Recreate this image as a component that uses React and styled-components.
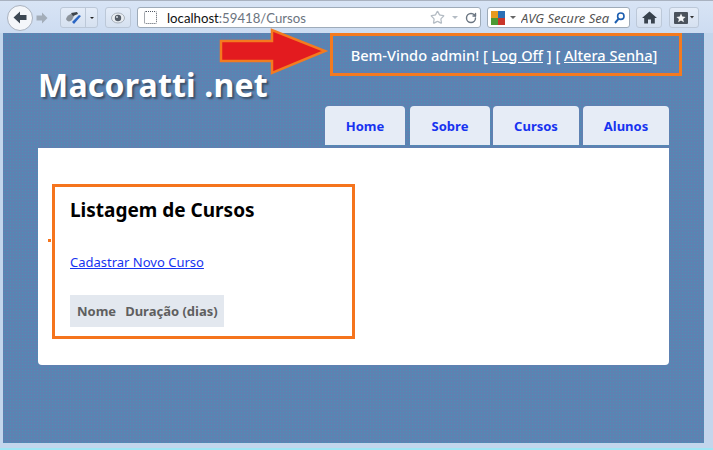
import styled, { createGlobalStyle } from "styled-components";
import { RotateCw, Star } from "lucide-react";

const GlobalStyle = createGlobalStyle`
  html, body {
    margin: 0;
    padding: 0;
    width: 713px;
    height: 450px;
    overflow: hidden;
    background: #c3d6ec;
    font-family: "Noto Sans", "DejaVu Sans", sans-serif;
  }
`;

const Window = styled.div`
  position: relative;
  width: 713px;
  height: 450px;
  display: flex;
  flex-direction: column;
  background: #c3d6ec;
  border-bottom: 2px solid #9fe6f4;
  box-sizing: border-box;
`;

const Toolbar = styled.div`
  height: 33px;
  flex: none;
  display: flex;
  align-items: center;
  padding: 1px 9px 0 7px;
  box-sizing: border-box;
  background: linear-gradient(#d8e4f5, #cddcf1);
  border-top: 1px solid #a9b2c0;
`;

const BackButton = styled.div`
  width: 26px;
  height: 26px;
  border-radius: 50%;
  flex: none;
  display: flex;
  align-items: center;
  justify-content: center;
  background: #f4f6fa;
  border: 1px solid #aab2bf;
  box-sizing: border-box;
`;

const ForwardButton = styled.div`
  width: 21px;
  height: 20px;
  margin-left: -2px;
  flex: none;
  display: flex;
  align-items: center;
  justify-content: center;
`;

const ToolButton = styled.div`
  height: 21px;
  width: ${(p) => p.$w}px;
  margin-left: ${(p) => p.$ml || 0}px;
  flex: none;
  display: flex;
  align-items: center;
  justify-content: center;
  border: 1px solid #bcc8d8;
  border-radius: 3px;
  background: linear-gradient(#e4ecf8, #d6e1f0);
  box-sizing: border-box;
`;

const SplitMain = styled.span`
  flex: 1;
  height: 100%;
  display: flex;
  align-items: center;
  justify-content: center;
  border-right: 1px solid #bcc8d8;
`;

const SplitCaret = styled.span`
  width: 11px;
  flex: none;
  display: flex;
  justify-content: center;
`;

const Field = styled.div`
  height: 21px;
  width: ${(p) => p.$w}px;
  margin-left: ${(p) => p.$ml}px;
  flex: none;
  display: flex;
  align-items: center;
  background: #fff;
  border: 1px solid #9eabb9;
  border-radius: 3px;
  box-sizing: border-box;
`;

const Favicon = styled.span`
  width: 13px;
  height: 13px;
  margin: 0 10px 0 6px;
  flex: none;
  border: 1px dotted #4f5762;
  border-radius: 2px;
  box-sizing: border-box;
`;

const UrlText = styled.span`
  flex: 1;
  font-family: Lato, "Noto Sans", sans-serif;
  font-size: 13.2px;
  color: #111;
  white-space: nowrap;
`;

const UrlMuted = styled.span`
  color: #6c7480;
`;

const SearchText = styled.span`
  flex: 1;
  font-size: 13px;
  font-style: italic;
  color: #555;
  white-space: nowrap;
  overflow: hidden;
`;

const Caret = styled.span`
  width: 0;
  height: 0;
  flex: none;
  margin: ${(p) => p.$m || 0};
  border-left: ${(p) => p.$s || 3}px solid transparent;
  border-right: ${(p) => p.$s || 3}px solid transparent;
  border-top: ${(p) => p.$s || 3}px solid ${(p) => p.$c || "#222"};
`;

const Viewport = styled.div`
  flex: 1;
  margin: 0 9px 5px 3px;
  padding: 0 35px;
  position: relative;
  background-color: #5c83b1;
  background-image: radial-gradient(#4a90b8 0.7px, transparent 0.8px),
    radial-gradient(#6c78b4 0.7px, transparent 0.8px);
  background-size: 3px 3px, 3px 3px;
  background-position: 0 0, 1.5px 1.5px;
  display: flex;
  flex-direction: column;
`;

const Header = styled.header`
  height: 112px;
  flex: none;
  display: flex;
  justify-content: space-between;
  align-items: flex-end;
  position: relative;
`;

const Title = styled.h1`
  margin: 0 0 41px;
  font-size: 32px;
  line-height: 38px;
  font-weight: 700;
  color: #fff;
  letter-spacing: 0.2px;
  text-shadow: 2px 2px 2px #3d4f66;
`;

const Nav = styled.nav`
  display: flex;
`;

const Tab = styled.a`
  width: ${(p) => p.$w}px;
  height: 39px;
  margin-left: ${(p) => p.$ml || 0}px;
  display: flex;
  align-items: center;
  justify-content: center;
  padding-top: 1px;
  box-sizing: border-box;
  background: #e6ecf6;
  border-radius: 4px 4px 0 0;
  font-size: 13px;
  font-weight: 700;
  color: #1733f0;
`;

const LoginBox = styled.div`
  position: absolute;
  top: 0;
  left: 292px;
  width: 352px;
  height: 43px;
  display: flex;
  align-items: center;
  justify-content: center;
  padding: 0 4px 0 0;
  box-sizing: border-box;
  border: 3px solid #f47a1f;
  color: #fff;
  font-size: 14.6px;
  font-weight: 500;
  white-space: pre;
`;

const LoginLink = styled.a`
  color: #fff;
  text-decoration: underline;
`;

const Arrow = styled.svg`
  position: absolute;
  left: 181px;
  top: -6px;
`;

const Content = styled.main`
  width: 631px;
  height: 217px;
  box-sizing: border-box;
  margin-top: 3px;
  padding: 36px 0 0 14px;
  background: #fff;
  border-radius: 0 0 4px 4px;
  position: relative;
`;

const Highlight = styled.section`
  width: 303px;
  height: 155px;
  box-sizing: border-box;
  border: 3px solid #f5741d;
  padding: 10px 0 0 15px;
`;

const Heading = styled.h2`
  margin: 0;
  font-size: 19px;
  line-height: 26px;
  font-weight: 700;
  color: #000;
`;

const NewLink = styled.a`
  display: block;
  margin-top: 30px;
  font-size: 13px;
  line-height: 18px;
  color: #1733f0;
  text-decoration: underline;
`;

const HeadRow = styled.div`
  display: inline-flex;
  gap: 9px;
  margin-top: 24px;
  padding: 0 6px 0 7px;
  height: 32px;
  align-items: center;
  background: #e3e8ef;
  font-size: 13px;
  font-weight: 700;
  color: #5f5f5f;
`;

const Dot = styled.span`
  position: absolute;
  left: 10px;
  top: 91px;
  width: 3px;
  height: 3px;
  background: #f5741d;
`;

export default function App() {
  return (
    <Window>
      <GlobalStyle />
      <Toolbar>
        <BackButton>
          <svg width="14" height="13" viewBox="0 0 14 13">
            <path d="M7 0.5 L0.5 6.5 L7 12.5 L7 9 L13.5 9 L13.5 4 L7 4 Z" fill="#3c4753" />
          </svg>
        </BackButton>
        <ForwardButton>
          <svg width="12" height="12" viewBox="0 0 12 12">
            <path d="M6 0.5 L11.5 6 L6 11.5 L6 8.5 L0.5 8.5 L0.5 3.5 L6 3.5 Z" fill="#a3adb9" />
          </svg>
        </ForwardButton>
        <ToolButton $w={38} $ml={8}>
          <SplitMain>
            <svg width="18" height="14" viewBox="0 0 18 14">
              <path d="M2 8 C3 4 7 2 11 3 L8 9 C6 11 3 11 2 8 Z" fill="#8d949c" />
              <path d="M7 2 L13 1 L14 3 L9 5 Z" fill="#3e444a" />
              <path d="M8 11 L15 4 L17 5 L10 13 Z" fill="#2a66c4" />
            </svg>
          </SplitMain>
          <SplitCaret>
            <Caret $s={2.5} />
          </SplitCaret>
        </ToolButton>
        <ToolButton $w={26} $ml={7}>
          <svg width="14" height="12" viewBox="0 0 14 12">
            <ellipse cx="7" cy="6" rx="6.5" ry="5" fill="#e9edf2" stroke="#a8b0ba" />
            <circle cx="7" cy="6" r="3.2" fill="#535b66" />
            <circle cx="6" cy="5" r="1" fill="#d6dce3" />
          </svg>
        </ToolButton>
        <Field $w={344} $ml={6}>
          <Favicon />
          <UrlText>
            localhost<UrlMuted>:59418/Cursos</UrlMuted>
          </UrlText>
          <Star size={15} color="#b4bcc4" />
          <Caret $m="0 7px" $s={3.5} $c="#b4bcc4" />
          <RotateCw size={12} color="#6b7682" strokeWidth={2.8} style={{ marginRight: 3 }} />
        </Field>
        <Field $w={143} $ml={6}>
          <svg width="14" height="14" viewBox="0 0 14 14" style={{ margin: "0 3px 0 3px", flex: "none" }}>
            <rect x="0" y="0" width="7" height="7" fill="#e89a20" />
            <rect x="7" y="0" width="7" height="7" fill="#2a6fb5" />
            <rect x="0" y="7" width="7" height="7" fill="#4b9a35" />
            <rect x="7" y="7" width="7" height="7" fill="#c9362a" />
          </svg>
          <Caret $m="0 5px 0 2px" $c="#666" />
          <SearchText>AVG Secure Sea</SearchText>
          <svg width="11" height="12" viewBox="0 0 11 12" style={{ margin: "0 4px 0 3px", flex: "none" }}>
            <circle cx="6.8" cy="4.2" r="3.2" fill="none" stroke="#1d5fb0" strokeWidth="1.6" />
            <path d="M4.5 6.8 L1 11" stroke="#1d5fb0" strokeWidth="2" />
          </svg>
        </Field>
        <ToolButton $w={26} $ml={6}>
          <svg width="15" height="13" viewBox="0 0 15 13">
            <path d="M7.5 0.5 L15 7 L12.8 7 L12.8 12.5 L9 12.5 L9 8.5 L6 8.5 L6 12.5 L2.2 12.5 L2.2 7 L0 7 Z" fill="#38424d" />
          </svg>
        </ToolButton>
        <ToolButton $w={30} $ml={7}>
          <svg width="21" height="14" viewBox="0 0 21 14">
            <rect x="0" y="1" width="14" height="12" rx="1" fill="#4a525c" />
            <path d="M7 2.5 L8.3 5.6 L11.6 5.9 L9.1 8 L9.9 11.2 L7 9.5 L4.1 11.2 L4.9 8 L2.4 5.9 L5.7 5.6 Z" fill="#f4f6f8" />
            <path d="M16 5 L20 5 L18 7.5 Z" fill="#333" />
          </svg>
        </ToolButton>
      </Toolbar>
      <Viewport>
        <Header>
          <Title>Macoratti .net</Title>
          <Nav>
            <Tab $w={80}>Home</Tab>
            <Tab $w={80} $ml={5}>Sobre</Tab>
            <Tab $w={86} $ml={3}>Cursos</Tab>
            <Tab $w={86} $ml={4}>Alunos</Tab>
          </Nav>
          <Arrow width="112" height="50" viewBox="0 0 112 50">
            <path d="M2 14 L53 14 L53 3 L106 24 L53 46 L53 34 L2 34 Z" fill="#e31b1f" stroke="#f47a1f" strokeWidth="2.5" />
          </Arrow>
          <LoginBox>
            Bem-Vindo admin! [ <LoginLink>Log Off</LoginLink> ] [ <LoginLink>Altera Senha</LoginLink>]
          </LoginBox>
        </Header>
        <Content>
          <Dot />
          <Highlight>
            <Heading>Listagem de Cursos</Heading>
            <NewLink>Cadastrar Novo Curso</NewLink>
            <HeadRow>
              <span>Nome</span>
              <span>Duração (dias)</span>
            </HeadRow>
          </Highlight>
        </Content>
      </Viewport>
    </Window>
  );
}
